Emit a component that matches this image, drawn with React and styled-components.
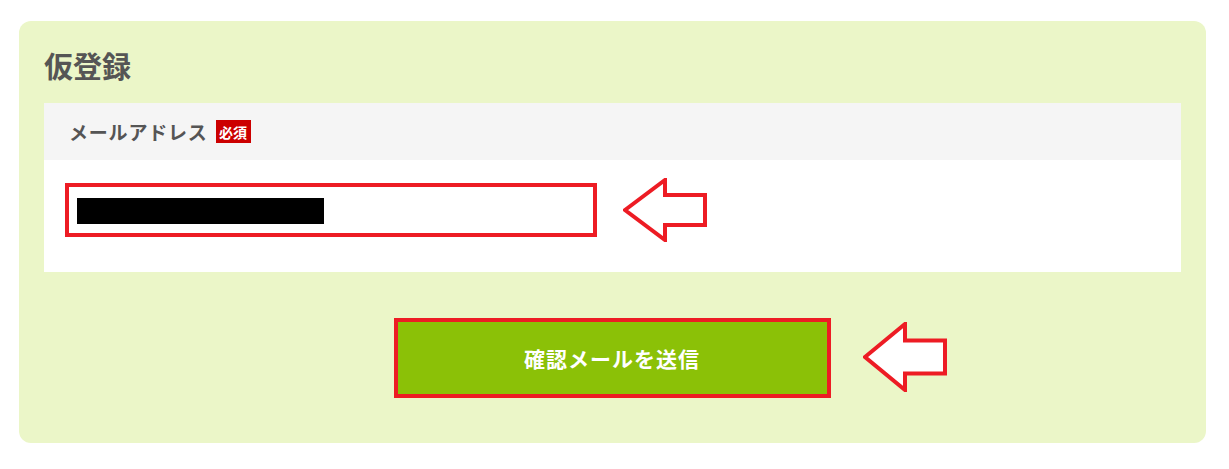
import React from "react";
import styled, { createGlobalStyle } from "styled-components";

const red = "#ed1c24";

const GlobalStyle = createGlobalStyle`
  html, body {
    margin: 0;
    padding: 0;
    background: #fff;
  }
  body {
    font-family: "Noto Sans CJK JP", "Noto Sans", sans-serif;
    color: #555;
  }
`;

const Page = styled.div`
  padding: 21px 23px 26px 19px;
`;

const Panel = styled.section`
  background: #ebf6c8;
  border-radius: 12px;
  padding: 25px 25px 45px 25px;
  height: 422px;
  box-sizing: border-box;
`;

const Title = styled.h2`
  margin: 0 0 19px;
  font-size: 29px;
  line-height: 38px;
  font-weight: 700;
  color: #555;
`;

const FormBox = styled.div`
  background: #fff;
`;

const FieldHead = styled.div`
  display: flex;
  align-items: center;
  gap: 8px;
  height: 57px;
  padding: 0 25px;
  background: #f5f5f5;
`;

const Label = styled.span`
  font-size: 19px;
  font-weight: 700;
  letter-spacing: 0.8px;
  color: #555;
`;

const Badge = styled.span`
  display: inline-flex;
  align-items: center;
  justify-content: center;
  width: 35px;
  height: 23px;
  background: #cc0000;
  color: #fff;
  font-size: 14px;
  font-weight: 700;
  line-height: 1;
`;

const FieldBody = styled.div`
  display: flex;
  align-items: center;
  gap: 26px;
  height: 112px;
  box-sizing: border-box;
  padding: 0 21px 12px;
`;

const InputBox = styled.div`
  width: 532px;
  height: 54px;
  box-sizing: border-box;
  border: 4px solid ${red};
  padding: 11px 8px 9px;
  background: #fff;
`;

const Redacted = styled.span`
  display: block;
  width: ${(p) => p.$w}px;
  height: 26px;
  background: #000;
`;

const ButtonRow = styled.div`
  display: flex;
  justify-content: center;
  margin-top: 46px;
`;

const ButtonWrap = styled.div`
  position: relative;
  margin-left: -1px;
`;

const SubmitButton = styled.button`
  display: flex;
  align-items: center;
  justify-content: center;
  width: 437px;
  height: 80px;
  box-sizing: border-box;
  border: 4px solid ${red};
  background: #8bc107;
  color: #fff;
  font-family: inherit;
  font-size: 21px;
  font-weight: 700;
  letter-spacing: 1px;
  cursor: pointer;
`;

const Pointer = styled.div`
  position: absolute;
  left: calc(100% + 32px);
  top: 4px;
`;

const Arrow = ({ w, h, shaft }) => {
  const s = 2;
  const headX = w * 0.5;
  const top = (h - shaft) / 2;
  const pts = [
    [s, h / 2],
    [headX, s],
    [headX, top],
    [w - s, top],
    [w - s, h - top],
    [headX, h - top],
    [headX, h - s],
  ]
    .map((p) => p.join(","))
    .join(" ");
  return (
    <svg width={w} height={h} viewBox={`0 0 ${w} ${h}`}>
      <polygon points={pts} fill="#fff" stroke={red} strokeWidth="4" strokeLinejoin="miter" />
    </svg>
  );
};

export default function App() {
  return (
    <>
      <GlobalStyle />
      <Page>
        <Panel>
          <Title>仮登録</Title>
          <FormBox>
            <FieldHead>
              <Label>メールアドレス</Label>
              <Badge>必須</Badge>
            </FieldHead>
            <FieldBody>
              <InputBox>
                <Redacted $w={247} />
              </InputBox>
              <Arrow w={84} h={64} shaft={30} />
            </FieldBody>
          </FormBox>
          <ButtonRow>
            <ButtonWrap>
              <SubmitButton type="button">確認メールを送信</SubmitButton>
              <Pointer>
                <Arrow w={84} h={70} shaft={33} />
              </Pointer>
            </ButtonWrap>
          </ButtonRow>
        </Panel>
      </Page>
    </>
  );
}
